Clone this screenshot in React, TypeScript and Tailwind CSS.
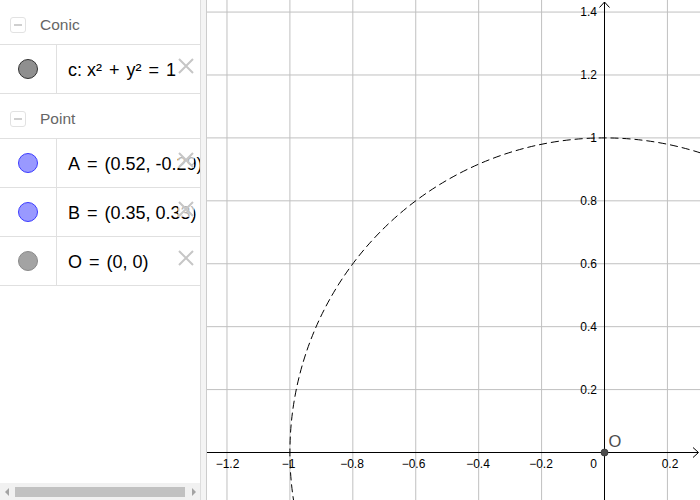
import React from 'react';

const O = { x: 604.5, y: 452.5 };
const U = 314.6;

const gridXs = [-6, -5, -4, -3, -2, -1, 1].map(k => O.x + (k * U) / 5);
const gridYs = [1, 2, 3, 4, 5, 6, 7].map(k => O.y - (k * U) / 5);

const xLabels: [string, number][] = [
  ['−1.2', 227.5],
  ['−1', 288.5],
  ['−0.8', 352],
  ['−0.6', 413.5],
  ['−0.4', 478],
  ['−0.2', 541],
  ['0.2', 670],
];
const yLabels = ['0.2', '0.4', '0.6', '0.8', '1', '1.2', '1.4'];

const DeleteX = () => (
  <div className="absolute left-[178px] top-[13px] h-4 w-4 bg-white/70">
    <svg viewBox="0 0 16 16" className="h-4 w-4">
      <path d="M1 1L15 15M15 1L1 15" stroke="#c6c6c6" strokeWidth="2" fill="none" />
    </svg>
  </div>
);

const Header = ({ label }: { label: string }) => (
  <div className="flex h-[45px] shrink-0 items-center border-b border-[#e0e0e0] pt-[5px]">
    <div className="ml-[10px] flex h-4 w-4 items-center justify-center rounded-[3px] border border-[#e2e2e2]">
      <div className="h-[2px] w-2 bg-[#cfcfcf]" />
    </div>
    <span className="ml-[14px] text-[15.5px] text-[#666666]">{label}</span>
  </div>
);

const Item = ({ fill, ring, children }: { fill: string; ring: string; children: React.ReactNode }) => (
  <div className="relative flex h-[49px] shrink-0 overflow-hidden border-b border-[#e0e0e0]">
    <div className="flex w-[57px] shrink-0 items-center justify-center border-r border-[#e0e0e0]">
      <div className="h-[20px] w-[20px] rounded-full border" style={{ background: fill, borderColor: ring }} />
    </div>
    <div className="flex items-center whitespace-nowrap pl-[11px] pt-[2px] text-[18px] text-black">{children}</div>
    <DeleteX />
  </div>
);

const Eq = () => <span className="mx-[7px]">=</span>;

export default function App() {
  return (
    <div className="flex h-[500px] w-[700px] overflow-hidden bg-white font-['Liberation_Sans',Arial,sans-serif]">
      <div className="flex w-[200px] shrink-0 flex-col">
        <Header label="Conic" />
        <Item fill="#8f8f8f" ring="#333333">
          <span>c:</span>
          <span className="ml-[5px]">x²</span>
          <span className="mx-[7px]">+</span>
          <span>y²</span>
          <Eq />
          <span>1</span>
        </Item>
        <Header label="Point" />
        <Item fill="#9999ff" ring="#3c3cff">
          <span>A</span>
          <Eq />
          <span>(0.52, -0.29)</span>
        </Item>
        <Item fill="#9999ff" ring="#3c3cff">
          <span>B</span>
          <Eq />
          <span>(0.35, 0.33)</span>
        </Item>
        <Item fill="#a3a3a3" ring="#8a8a8a">
          <span>O</span>
          <Eq />
          <span>(0, 0)</span>
        </Item>
        <div className="flex-1" />
        <div className="flex h-[17px] shrink-0 items-center bg-[#f1f1f1]">
          <div className="ml-[5px] h-0 w-0 border-y-[4px] border-r-[4px] border-y-transparent border-r-[#a3a3a3]" />
          <div className="ml-[6px] h-[10px] w-[170px] bg-[#c1c1c1]" />
          <div className="ml-[7px] h-0 w-0 border-y-[4px] border-l-[4px] border-y-transparent border-l-[#a3a3a3]" />
        </div>
      </div>
      <div className="w-[7px] shrink-0 border-x border-l-[#dddddd] border-r-[#cccccc] bg-[#f4f4f4]" />
      <svg className="h-[500px] flex-1" viewBox="207 0 493 500">
        {gridXs.map(x => (
          <line key={'gx' + x} x1={x} y1={0} x2={x} y2={500} stroke="#c0c0c0" strokeWidth="1" />
        ))}
        {gridYs.map(y => (
          <line key={'gy' + y} x1={207} y1={y} x2={700} y2={y} stroke="#c0c0c0" strokeWidth="1" />
        ))}
        <line x1={207} y1={O.y} x2={698} y2={O.y} stroke="#000" strokeWidth="1" />
        <path d={`M693 ${O.y - 5}L698.5 ${O.y}L693 ${O.y + 5}`} stroke="#000" fill="none" strokeWidth="1" />
        <line x1={O.x} y1={2} x2={O.x} y2={500} stroke="#000" strokeWidth="1" />
        <path d={`M${O.x - 5} 7.5L${O.x} 2L${O.x + 5} 7.5`} stroke="#000" fill="none" strokeWidth="1" />
        <circle cx={O.x} cy={O.y} r={U} fill="none" stroke="#000" strokeWidth="1" strokeDasharray="8 4" />
        <g fontSize="12" fill="#000" fontFamily="'Liberation Sans', Arial, sans-serif">
          {xLabels.map(([t, x]) => (
            <text key={t} x={x} y={468} textAnchor="middle">
              {t}
            </text>
          ))}
          <text x={597} y={468} textAnchor="end">
            0
          </text>
          {yLabels.map((t, i) => (
            <text key={t} x={597} y={gridYs[i] + 4} textAnchor="end">
              {t}
            </text>
          ))}
        </g>
        <circle cx={O.x} cy={O.y} r={3.5} fill="#4d4d4d" stroke="#333" strokeWidth="0.8" />
        <text x={608.5} y={447} fontSize="16.5" fill="#4d4d4d" fontFamily="'Liberation Sans', Arial, sans-serif">
          O
        </text>
      </svg>
    </div>
  );
}
